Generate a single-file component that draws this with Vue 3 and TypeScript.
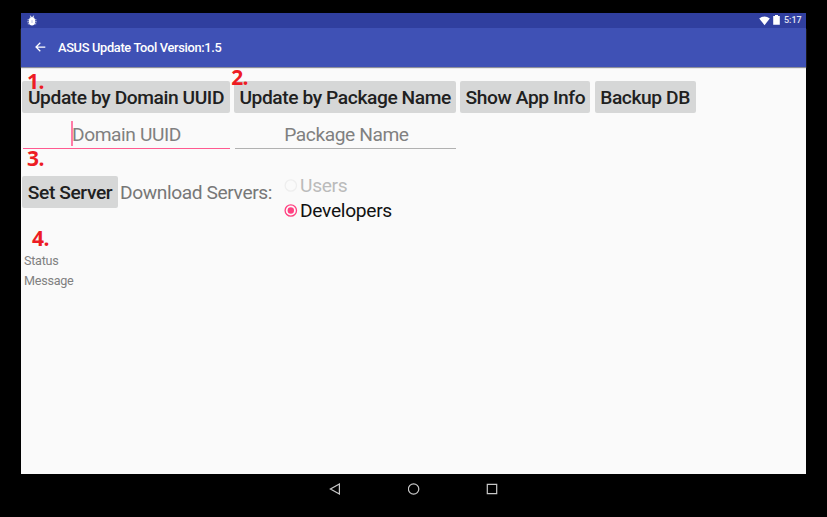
<script setup lang="ts">
import { ref } from 'vue'

const domain = ref('')
const packageName = ref('')
const server = ref('Developers')
const servers = [
  { name: 'Users', disabled: true },
  { name: 'Developers', disabled: false },
]
</script>

<template>
  <div class="device">
    <div class="screen">
      <div class="statusbar">
        <svg class="bug" width="10" height="11" viewBox="0 0 10 11">
          <path d="M2 4.4Q2.4 2 5 2T8 4.4V7.6Q7.8 10.6 5 10.6T2 7.6Z" fill="#fff" />
          <path d="M3.4 .7 4.2 2.4M6.6 .7 5.8 2.4" stroke="#fff" stroke-width="1" />
          <path d="M.6 4.8H9.4M.3 6.8H9.7M.8 8.8H9.2" stroke="#fff" stroke-opacity=".75" stroke-width="1" />
          <path d="M5 5.2V8" stroke="#a5addb" stroke-width=".8" />
        </svg>
        <span class="spacer"></span>
        <svg class="wifi" width="11" height="10" viewBox="0 0 11 10">
          <path d="M.2 2.4Q5.5-1.4 10.8 2.4L5.5 9.2Z" fill="#fff" />
        </svg>
        <svg class="battery" width="7" height="10" viewBox="0 0 7 10">
          <path d="M2 0H5V1H6.8V9.8H.2V1H2Z" fill="#fff" />
        </svg>
        <span class="clock">5:17</span>
      </div>
      <header class="appbar">
        <svg width="11" height="10" viewBox="0 0 11 10" fill="none" stroke="#fff" stroke-width="1.25">
          <path d="M10.3 5H1.1M5.3 .7 1 5 5.3 9.3" />
        </svg>
        <h1>ASUS Update Tool Version:1.5</h1>
      </header>
      <main>
        <div class="tools">
          <button class="btn"><span class="mark one">1.</span>Update by Domain UUID</button>
          <button class="btn"><span class="mark two">2.</span>Update by Package Name</button>
          <button class="btn">Show App Info</button>
          <button class="btn">Backup DB</button>
          <label class="field active">
            <span v-if="!domain" class="hint"><i class="caret"></i>Domain UUID</span>
            <input v-model="domain" aria-label="Domain UUID" />
          </label>
          <label class="field">
            <span v-if="!packageName" class="hint pkg">Package Name</span>
            <input v-model="packageName" aria-label="Package Name" />
          </label>
        </div>
        <div class="server">
          <button class="btn set"><span class="mark three">3.</span>Set Server</button>
          <span class="label">Download Servers:</span>
          <div class="options">
            <label v-for="s in servers" :key="s.name" class="option" :class="{ disabled: s.disabled }">
              <input v-model="server" type="radio" :value="s.name" :disabled="s.disabled" />
              <svg width="14" height="14" viewBox="0 0 14 14">
                <circle cx="6.8" cy="6.5" r="5.7" fill="none" stroke="currentColor" stroke-width="1.3" />
                <circle v-if="server === s.name" cx="6.8" cy="6.5" r="3.2" fill="currentColor" />
              </svg>
              <span class="name">{{ s.name }}</span>
            </label>
          </div>
        </div>
        <div class="output">
          <span class="mark four">4.</span>
          <p class="status">Status</p>
          <p class="message">Message</p>
        </div>
      </main>
    </div>
    <nav>
      <svg width="12" height="12" viewBox="0 0 12 12"><path d="M10.4 1V11L1.4 6Z" /></svg>
      <svg width="12" height="12" viewBox="0 0 12 12"><circle cx="5.6" cy="6" r="5.2" /></svg>
      <svg width="12" height="12" viewBox="0 0 12 12"><path d="M1.3 1.3H10.7V10.7H1.3Z" /></svg>
    </nav>
  </div>
</template>

<style>
body {
  margin: 0;
  background: #000;
}
</style>

<style scoped>
.device {
  box-sizing: border-box;
  width: 827px;
  height: 517px;
  padding: 13px 21px 0;
  background: #000;
  font-family: Roboto, sans-serif;
  overflow: hidden;
}
.screen {
  height: 461px;
  background: #fafafa;
}
.statusbar {
  display: flex;
  align-items: center;
  box-sizing: border-box;
  height: 15px;
  padding: 0 4px 0 6px;
  background: #303f9f;
  color: #e4e6f3;
}
.spacer {
  flex: 1;
}
.wifi {
  margin-right: 3px;
}
.battery {
  margin: -1px 4px 0 0;
}
.clock {
  width: 18px;
  font-size: 9px;
  font-weight: 500;
  line-height: 15px;
  white-space: nowrap;
}
.appbar {
  display: flex;
  align-items: center;
  height: 39px;
  padding-left: 14px;
  background: #3f51b5;
  box-shadow: 0 1px 1px #8d8f9a;
}
.appbar svg {
  margin-top: -1px;
}
h1 {
  margin: 0 0 0 12px;
  color: #fff;
  font-size: 12.8px;
  font-weight: 500;
  letter-spacing: -0.31px;
}
main {
  padding: 14px 1px 0;
}
.tools {
  display: grid;
  grid-template-columns: 208px 222px 130px 101px;
  column-gap: 4.2px;
}
.btn {
  position: relative;
  height: 32px;
  padding: 0;
  border: 0;
  border-radius: 2px;
  background: #d6d7d7;
  color: #202020;
  font: 500 19.2px/33px Roboto, sans-serif;
  letter-spacing: -0.41px;
  white-space: nowrap;
}
.mark {
  position: absolute;
  color: #ed1c24;
  font: 700 21px/22px "Open Sans", sans-serif;
  letter-spacing: -0.6px;
}
.one {
  left: 5px;
  top: -11px;
}
.two {
  left: -3px;
  top: -15px;
}
.three {
  left: 5px;
  top: -29px;
}
.four {
  left: 10px;
  top: -24px;
}
.field {
  display: flex;
  position: relative;
  height: 35px;
  margin-left: 1px;
  border-bottom: 1px solid #b1b1b1;
  color: #808080;
  font-size: 19.2px;
  letter-spacing: -0.42px;
}
.field.active {
  border-bottom-color: #ff5a90;
}
.field input {
  position: absolute;
  inset: 0;
  width: 100%;
  border: 0;
  padding: 0;
  opacity: 0;
}
.hint {
  display: flex;
  padding: 9px 0 0 48px;
  line-height: 26px;
}
.pkg {
  padding-left: 49px;
}
.caret {
  flex: none;
  width: 2px;
  height: 25px;
  margin: -1px -1px 0 0;
  background: #ff7ba7;
}
.server {
  display: flex;
  align-items: center;
  height: 50px;
  margin-top: 18px;
}
.set {
  width: 96px;
}
.label {
  width: 160px;
  margin-left: 2px;
  color: #777;
  font-size: 19.2px;
  letter-spacing: -0.4px;
  white-space: nowrap;
}
.option {
  display: flex;
  align-items: center;
  height: 25px;
  color: #ff4081;
}
.option input {
  position: absolute;
  opacity: 0;
  pointer-events: none;
}
.options {
  margin: 12px 0 0 3.5px;
}
.name {
  margin-left: 2.5px;
  color: #111;
  font-size: 19.2px;
  letter-spacing: -0.3px;
}
.disabled {
  color: #eee;
}
.disabled .name {
  color: #bbb;
}
.output {
  position: relative;
  margin-top: 34px;
  padding-left: 2px;
  color: #808080;
  font-size: 12.6px;
  line-height: 20px;
  letter-spacing: -0.25px;
}
p {
  margin: 0;
}
nav {
  display: flex;
  justify-content: center;
  gap: 66.5px;
  margin-top: 9px;
}
nav svg {
  fill: none;
  stroke: #c8c8c8;
  stroke-width: 1.2;
}
</style>
